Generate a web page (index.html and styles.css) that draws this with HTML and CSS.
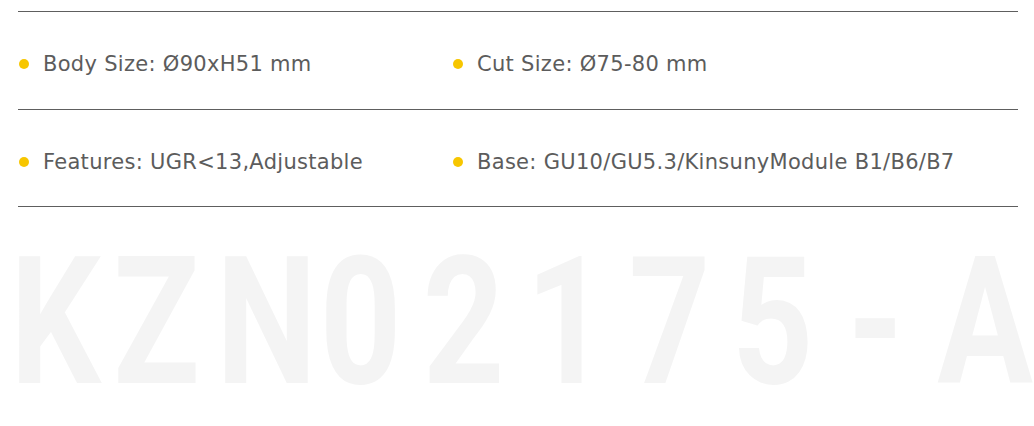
FILE: index.html
```html
<!DOCTYPE html>
<html lang="en">
<head>
<meta charset="utf-8">
<title>KZN02175-A</title>
<link rel="stylesheet" href="styles.css">
</head>
<body>
  <section class="specs">
    <div class="row">
      <div class="item"><span class="dot"></span><span class="label">Body Size: Ø90xH51 mm</span></div>
      <div class="item"><span class="dot"></span><span class="label">Cut Size: Ø75-80 mm</span></div>
    </div>
    <div class="row">
      <div class="item"><span class="dot"></span><span class="label">Features: UGR&lt;13,Adjustable</span></div>
      <div class="item"><span class="dot"></span><span class="label">Base: GU10/GU5.3/KinsunyModule B1/B6/B7</span></div>
    </div>
  </section>
  <div class="model" aria-label="KZN02175-A"><span>K</span><span>Z</span><span>N</span><span>0</span><span>2</span><span>1</span><span>7</span><span>5</span><span>-</span><span>A</span></div>
</body>
</html>
```
FILE: styles.css
```css
html, body {
  margin: 0;
  padding: 0;
  background: #ffffff;
}

body {
  width: 1034px;
  height: 426px;
  overflow: hidden;
}

.specs {
  margin: 11px 16px 0 18px;
  border-top: 1px solid #5e5e5e;
}

.row {
  display: grid;
  grid-template-columns: 434px 1fr;
  height: 98px;
  padding: 7px 0 0 1px;
  box-sizing: border-box;
  align-items: center;
  border-bottom: 1px solid #5e5e5e;
}

.row + .row {
  height: 97px;
  padding-top: 8px;
}

.item {
  display: flex;
  align-items: center;
  gap: 14px;
}

.dot {
  width: 10px;
  height: 10px;
  border-radius: 50%;
  background: #f7c600;
  flex: none;
}

.label {
  font-family: "DejaVu Sans", sans-serif;
  font-size: 21px;
  color: #5c5c5c;
  letter-spacing: 0.3px;
  white-space: nowrap;
}

.model {
  margin-top: 26px;
  display: grid;
  grid-template-columns: repeat(10, 103px);
  font-family: Roboto, sans-serif;
  font-weight: 700;
  font-size: 178px;
  line-height: 1;
  color: #f4f4f4;
  white-space: nowrap;
}

.model span {
  text-align: center;
  transform: scaleX(0.8);
}
```
